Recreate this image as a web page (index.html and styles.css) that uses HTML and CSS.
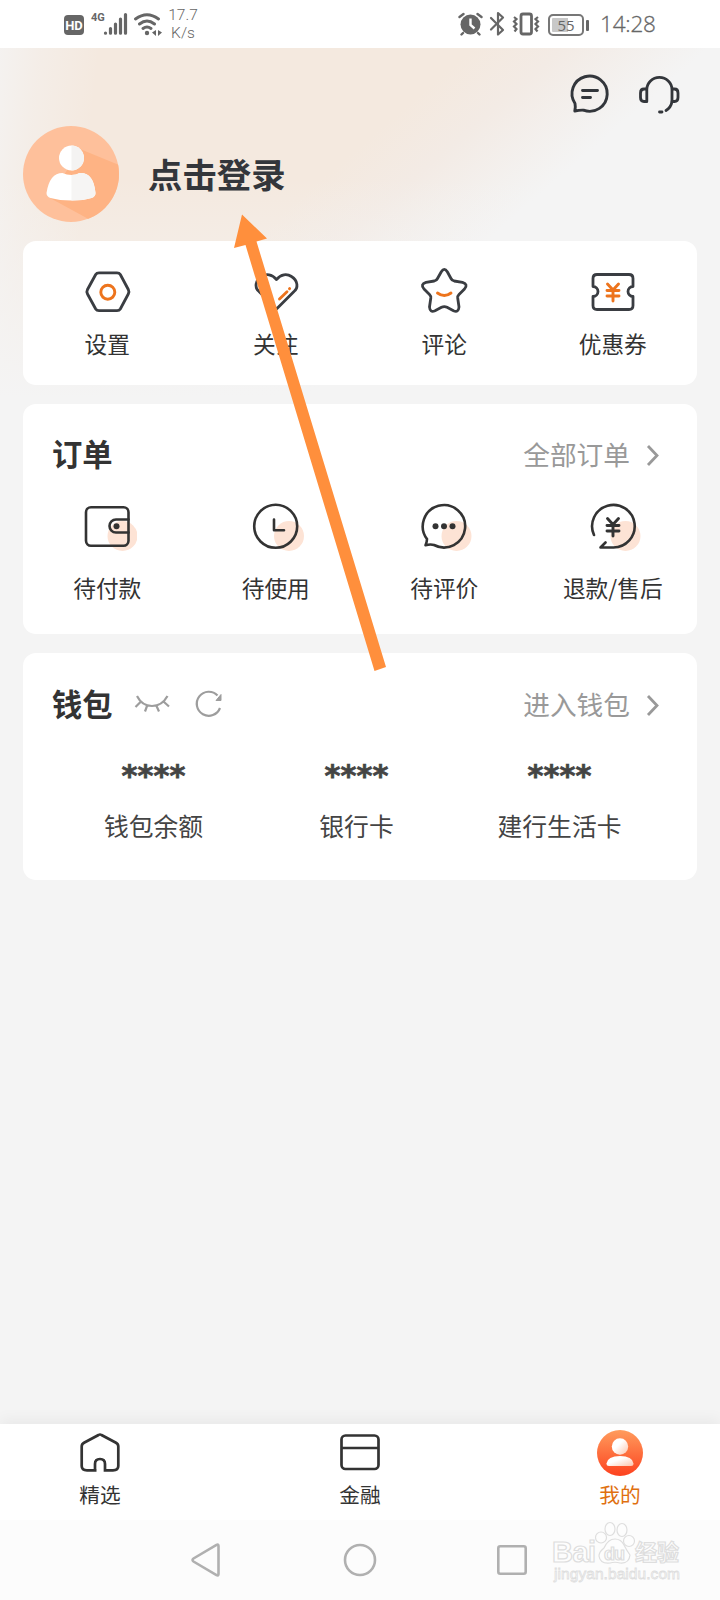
FILE: index.html
```
<!DOCTYPE html>
<html lang="zh-CN">
<head>
<meta charset="utf-8">
<title>我的</title>
<link rel="stylesheet" href="styles.css">
</head>
<body>
<div class="screen">
  <div class="status">
    <div class="status-left">
      <span class="hd">HD</span>
      <span class="net">4G</span>
      <svg class="signal" width="26" height="26" viewBox="102 11 26 26" stroke="#666" stroke-width="3.2" stroke-linecap="round"><path d="M105.500 33v.2M110.500 28.500v4.700M115.500 24v9.200M120.500 19v14.200M125.500 14.500v18.700"/></svg>
      <svg class="wifi" width="30" height="26" viewBox="132 11 30 26" fill="none" stroke="#666" stroke-width="2.900" stroke-linecap="round"><path d="M135.500 19q11.500-8.500 23 0M139.500 24q7.500-6 15 0M143 28.500q4-3 8 0"/><circle cx="147" cy="33" r="2.200" fill="#666" stroke="none"/><path d="M156 30v6l-4-3.500zM158 30v6l4-3.500z" fill="#666" stroke="none"/></svg>
      <span class="speed">17.7<br>K/s</span>
    </div>
    <div class="status-right">
      <svg width="26" height="26" viewBox="458 11 26 26"><circle cx="471.500" cy="24.500" r="10" fill="#666"/><path d="M460.500 17l4-3M482.500 17l-4-3M464 33l-1.500 1.500M479 33l1.500 1.500" stroke="#666" stroke-width="2.400" stroke-linecap="round"/><path d="M471.500 18.500v6.500l4 3.500" fill="none" stroke="#fff" stroke-width="2.400"/></svg>
      <svg width="20" height="26" viewBox="488 11 20 26" fill="none" stroke="#666" stroke-width="2.200" stroke-linejoin="round" stroke-linecap="round"><path d="M492 18l12 12-5 4.500V13l5 4.500-12 12"/></svg>
      <svg width="30" height="26" viewBox="512 11 30 26" fill="none" stroke="#666" stroke-width="2.200"><rect x="522" y="14" width="10.500" height="20" rx="2" stroke-width="2.800"/><path d="M515 17l2.500 2-2.500 2.500 2.500 2.500-2.500 2.500 2.500 2.500-2 2.500M539 17l-2.500 2 2.500 2.500-2.500 2.500 2.500 2.500-2.500 2.500 2 2.500"/></svg>
      <span class="battery">55</span>
      <span class="clock">14:28</span>
    </div>
  </div>

  <main class="page">
    <header class="head">
      <div class="actions">
        <svg width="48" height="44" viewBox="565.500 72 48 44" fill="none" stroke="#33363b" stroke-width="2.900" stroke-linecap="round" stroke-linejoin="round"><path d="M574.500 103.500A17.600 17.600 0 1 1 583 110.200Q579.500 110 574.300 111Q575.300 107.500 574.500 103.500Z"/><path d="M582 90.500h15M582 97.500h8"/></svg>
        <svg width="48" height="44" viewBox="635 72 48 44" fill="none" stroke="#33363b" stroke-width="2.800" stroke-linecap="round" stroke-linejoin="round"><path d="M646.800 101.500V89.500a12.500 12 0 0 1 25.200 0V101.500q-1 6-6 9"/><path d="M646.500 89h-2.500q-3.500 0-3.500 4v4.500q0 4 3.500 4h2.500M672.500 89h2q3.500 0 3.500 4v4.500q0 4-3.500 4h-2.500M659.500 112h2.500"/></svg>
      </div>
      <div class="profile">
        <svg width="96" height="96" viewBox="0 0 96 96">
          <defs><clipPath id="face"><circle cx="48" cy="48" r="48"/></clipPath></defs>
          <g clip-path="url(#face)"><rect width="96" height="96" fill="#fec09b"/><path d="M57 23L96 39v57H71L27 72z" fill="#feb384"/></g>
          <circle cx="48.500" cy="32" r="12.500" fill="#fff"/><path d="M48.500 19.500a12.500 12.500 0 0 1 0 25z" fill="#f4f3f2"/>
          <path d="M48.500 49q5 0 8-2 14-1 16 20 0 3.500-4 5-8 2.500-20 2.500t-21-2.500q-4-1.500-4-5 3-20 16-20 4 2 9 2z" fill="#fff"/><path d="M48.500 49q5 0 8-2 14-1 16 20 0 3.500-4 5-8 2.500-20 2.500z" fill="#f6f5f4"/>
        </svg>
        <h1 class="login">点击登录</h1>
      </div>
    </header>

    <section class="card shortcuts">
      <div class="item">
        <svg class="icon" viewBox="-30 -30 60 60"><path d="M-8-19.200H10Q12.300-19.200 13.300-17.500L21.300-2.500Q22.500-.200 21.300 2L13.300 17Q12.300 18.700 10 18.700H-8Q-10.300 18.700-11.300 17L-19.500 2Q-20.700-.200-19.500-2.500L-11.300-17.500Q-10.300-19.200-8-19.200Z"/><circle class="accent" cx=".8" cy="0.200" r="7"/></svg>
        <span>设置</span>
      </div>
      <div class="item">
        <svg class="icon" viewBox="-30 -30 60 60"><path d="M.500-12.500C5-18 11-18.500 15.500-15.500C22-11.500 22.500-4 18-.500L.500 17L-17-.500C-21.500-4-21-11.500-14.500-15.500C-10-18.500-4-18 .500-12.500Z"/><path class="accent" d="M3.500 7L11-.200M13.500-3.300l.100-.100"/></svg>
        <span>关注</span>
      </div>
      <div class="item">
        <svg class="icon" viewBox="-30 -30 60 60"><path d="M-2.700-20.200Q.300-25 3.300-20.200L7-13.500Q8-11.500 10.200-11L18.500-9.700Q24.500-8 20.500-3L15 2.500Q13.500 4 13.700 6L15 15Q14.500 21 9.500 18.700L3 15.300Q.300 14-2.500 15.300L-9 18.700Q-14 21-14.500 15L-13.200 6Q-13 4-14.500 2.500L-20 -3Q-24-8-18-9.700L-9.700-11Q-7.500-11.500-6.500-13.500Z"/><path class="accent" d="M-6.500 1Q.300 6 7 1"/></svg>
        <span>评论</span>
      </div>
      <div class="item">
        <svg class="icon" viewBox="-30 -30 60 60"><path d="M-16-17.500H16Q20-17.500 20-13.500V-5.500A5 5 0 0 0 20 4.500V13.500Q20 17.500 16 17.500H-16Q-20 17.500-20 13.500V4.500A5 5 0 0 0-20-5.500V-13.500Q-20-17.500-16-17.500Z"/><path class="accent yen" d="M-5.500-8L0-2L5.500-8M0-2V9M-6-1.500H6M-6 4H6"/></svg>
        <span>优惠券</span>
      </div>
    </section>

    <section class="card orders">
      <div class="card-head">
        <h2>订单</h2>
        <a class="more">全部订单<svg width="14" height="24" viewBox="0 0 14 24"><path d="M2 4L11 13.500L2 23"/></svg></a>
      </div>
      <div class="grid4">
        <div class="item">
          <svg class="icon thin" viewBox="-30 -30 60 60"><circle class="blob" cx="15.500" cy="10" r="15"/><rect x="-21" y="-18.700" width="42.500" height="38.500" rx="5"/><path d="M21.500-6.500H9a6.500 6.500 0 0 0 0 13H21.500"/><circle class="dot" cx="9.500" cy="0.300" r="3"/></svg>
          <span>待付款</span>
        </div>
        <div class="item">
          <svg class="icon thin" viewBox="-30 -30 60 60"><circle class="blob" cx="13" cy="10" r="15"/><circle cx="-.300" cy="0.300" r="21.500"/><path d="M-2-6.500V4.300H8"/></svg>
          <span>待使用</span>
        </div>
        <div class="item">
          <svg class="icon thin" viewBox="-30 -30 60 60"><circle class="blob" cx="12.500" cy="10" r="15"/><path d="M-17 13A21.200 21.200 0 1 1-10 19Q-13.500 18-18.500 19.200Q-17 16-17 13Z"/><circle class="dot" cx="-8.500" cy="0.300" r="3"/><circle class="dot" cx="0" cy="0.300" r="3"/><circle class="dot" cx="8.500" cy="0.300" r="3"/></svg>
          <span>待评价</span>
        </div>
        <div class="item">
          <svg class="icon thin" viewBox="-30 -30 60 60"><circle class="blob" cx="12.500" cy="10" r="15"/><path d="M-19 9A21.300 21.300 0 1 1 0 21.500H-12.500L-7.500 16.500"/><path class="yen" d="M-5.500-7.500L0-1.500L5.500-7.500M0-1.500V10M-6-.500H6M-6 5H6"/></svg>
          <span>退款/售后</span>
        </div>
      </div>
    </section>

    <section class="card wallet">
      <div class="card-head">
        <h2>钱包</h2>
        <svg class="eye" width="38" height="24" viewBox="133 691 38 24"><path d="M137 695Q142 705 152 705Q162 705 167.500 695M140.500 701L135.500 706M164 701L169 705.500M147 705L145 710.500M156.500 705L159 710.500"/></svg>
        <svg class="refresh" width="30" height="30" viewBox="194 689 30 30"><path d="M220 708A12 12 0 1 1 217.500 695.500"/><path d="M221 694.500V700.500H216Z" fill="#9d9d9d" stroke-width="1"/></svg>
        <a class="more">进入钱包<svg width="14" height="24" viewBox="0 0 14 24"><path d="M2 4L11 13.500L2 23"/></svg></a>
      </div>
      <div class="grid3">
        <div class="asset"><b>****</b><span>钱包余额</span></div>
        <div class="asset"><b>****</b><span>银行卡</span></div>
        <div class="asset"><b>****</b><span>建行生活卡</span></div>
      </div>
    </section>
  </main>

  <nav class="tabs">
    <div class="tab">
      <svg width="50" height="50" viewBox="-25 -25 50 50"><path d="M-3.500 17.300H-13Q-18.300 17.300-18.300 13V-6.500Q-18.300-9-16-10.300L-1.500-18Q0-19 1.500-18L16-10.300Q18.300-9 18.300-6.500V13Q18.300 17.300 13 17.300H5V11Q5 6 0 6T-5 11V17.300"/></svg>
      <span>精选</span>
    </div>
    <div class="tab">
      <svg width="50" height="50" viewBox="-25 -25 50 50"><rect x="-18.500" y="-17.500" width="37" height="33.500" rx="4"/><path d="M-18.500-5H18.500"/></svg>
      <span>金融</span>
    </div>
    <div class="tab active">
      <svg width="50" height="50" viewBox="-25 -25 50 50">
        <defs><linearGradient id="fire" x1="0" y1="0" x2="0" y2="1"><stop offset="0" stop-color="#ff9c5d"/><stop offset="1" stop-color="#fd421f"/></linearGradient><linearGradient id="pearl" x1="0" y1="0" x2="1" y2="1"><stop offset=".4" stop-color="#fff"/><stop offset="1" stop-color="#fdc3aa"/></linearGradient></defs>
        <circle cx="0" cy="0" r="23" fill="url(#fire)" stroke="none"/><circle cx="0" cy="-6.500" r="8.200" fill="url(#pearl)" stroke="none"/><path d="M-13.500 10.500Q-12.500 3 0 3T13.500 10.500Q13.500 13 11 13H-11Q-13.500 13-13.500 10.500Z" fill="url(#pearl)" stroke="none"/>
      </svg>
      <span>我的</span>
    </div>
  </nav>

  <div class="sysnav">
    <svg width="34" height="40" viewBox="189 1540 34 40"><path d="M217.500 1546V1574Q217.500 1576 215.500 1575L192.500 1561.500Q190.500 1560 192.500 1558.500L215.500 1545Q217.500 1544 217.500 1546Z"/></svg>
    <svg width="34" height="40" viewBox="343 1540 34 40"><circle cx="360" cy="1560" r="15"/></svg>
    <svg width="34" height="40" viewBox="496 1540 34 40"><rect x="498.300" y="1546.300" width="27.400" height="27.400" rx="2"/></svg>
  </div>

  <svg class="watermark" width="136" height="70" viewBox="550 1518 136 70">
    <g class="outline">
      <text class="wm-latin" x="552" y="1562" textLength="44">Bai</text>
      <circle cx="601" cy="1537.500" r="5.500"/><ellipse cx="610" cy="1529" rx="5" ry="6.500"/><ellipse cx="622" cy="1530" rx="5" ry="6.500"/><circle cx="629" cy="1541" r="5.500"/>
      <path d="M615 1539Q621 1539 624 1545T630 1555Q629 1564 620 1563Q615 1561.500 610 1563Q600 1564 599 1556Q599 1552 604 1548Q608 1539 615 1539Z"/>
      <text class="wm-du" x="604" y="1560" textLength="21">du</text>
      <text class="wm-cjk" x="635" y="1560" textLength="44">经验</text>
    </g>
    <text class="wm-url" x="554" y="1579" textLength="126">jingyan.baidu.com</text>
  </svg>

  <svg class="arrow" width="170" height="470" viewBox="225 208 170 470"><path d="M242 214.500L267 238.500L256.500 241.500L386 667L374.500 671L245.500 245L234 248Z" fill="#ff8f3c"/></svg>
</div>
</body>
</html>
```
FILE: styles.css
```
* { box-sizing: border-box; }

body {
  margin: 0;
  font-family: "Noto Sans CJK SC", sans-serif;
  color: #333;
}

h1, h2 { margin: 0; }
svg { display: block; flex: none; }

.screen {
  position: relative;
  display: flex;
  flex-direction: column;
  width: 720px;
  height: 1600px;
  overflow: hidden;
  background: #f4f4f4;
}

/* Status bar */
.status {
  display: flex;
  justify-content: space-between;
  height: 48px;
  padding: 0 65px 0 64px;
  background: #fff;
  color: #666;
}
.status-left, .status-right { display: flex; align-items: center; }
.hd {
  width: 20px;
  height: 20px;
  margin-top: 2px;
  border-radius: 4px;
  background: #666;
  color: #fff;
  font: bold 13px/21px Roboto, sans-serif;
  text-align: center;
}
.net {
  width: 14px;
  margin: -12px 0 0 7px;
  font: bold 11px/12px Roboto, sans-serif;
}
.signal { margin-left: -3px; }
.wifi { margin-left: 4px; }
.speed {
  width: 34px;
  margin-left: 4px;
  font: 300 15.500px/18px Roboto, sans-serif;
  text-align: center;
}
.status-right svg { margin-right: 4px; }
.battery {
  position: relative;
  width: 36px;
  height: 22px;
  margin: 1px 16px 0 3px;
  border: 2px solid #777;
  border-radius: 5px;
  background: linear-gradient(90deg, #c8c8c8 55%, #fff 55%);
  box-shadow: inset 0 0 0 2px #fff;
  font: 15px/18px "Open Sans", sans-serif;
  text-align: center;
}
.battery::after {
  content: "";
  position: absolute;
  top: 4px;
  right: -7px;
  width: 3px;
  height: 11px;
  border-radius: 1px;
  background: #666;
}
.clock {
  width: 55px;
  font: 300 22.500px/30px "Open Sans", sans-serif;
  letter-spacing: -.2px;
  -webkit-text-stroke: .3px #666;
}

/* Page */
.page {
  flex: 1;
  padding: 0 23px;
  background:
    linear-gradient(180deg, rgba(244, 244, 244, 0) 130px, #f4f4f4 350px) 0 0 / 100% 400px no-repeat,
    linear-gradient(96deg, rgba(244, 244, 244, .8), rgba(244, 244, 244, .4) 40px, rgba(244, 244, 244, 0) 100px) 0 0 / 100% 400px no-repeat,
    linear-gradient(139deg, #f4e9df 310px, #f3ebe5 370px, #f4f4f4 465px) 0 0 / 100% 400px no-repeat;
}
.actions {
  display: flex;
  justify-content: flex-end;
  gap: 21px;
  height: 78px;
  padding: 24px 14px 0 0;
}
.profile {
  display: flex;
  align-items: center;
  gap: 29px;
  height: 96px;
  margin-bottom: 19px;
}
.login { margin-top: -3px; font-size: 34.400px; line-height: 44px; color: #33363b; }

.card {
  margin-bottom: 19px;
  border-radius: 13px;
  background: #fff;
}
.shortcuts, .grid4 { display: grid; grid-template-columns: repeat(4, 1fr); }
.shortcuts { height: 144px; padding-top: 21px; }
.orders { height: 230px; padding-top: 30px; }
.wallet { height: 227px; padding-top: 31px; }

.item {
  display: flex;
  flex-direction: column;
  align-items: center;
  font-size: 22.700px;
  line-height: 30px;
}
.shortcuts .item { gap: 7px; }
.grid4 .item { gap: 17px; }

.icon {
  width: 60px;
  height: 60px;
  fill: none;
  stroke: #3a3d42;
  stroke-width: 2.800;
  stroke-linecap: round;
  stroke-linejoin: round;
}
.icon.thin { stroke: #333; stroke-width: 2.600; }
.icon .accent { stroke: #ed741d; stroke-width: 2.900; }
.icon .yen { stroke-width: 2.900; }
.icon .blob { fill: #fde3d5; stroke: none; }
.icon .dot { fill: #333; stroke: none; }

.card-head {
  display: flex;
  align-items: center;
  height: 40px;
  padding: 0 37px 0 29px;
}
.card-head h2 { margin-top: -2px; font-size: 30.300px; line-height: 40px; }
.more {
  display: flex;
  align-items: center;
  gap: 16px;
  margin-left: auto;
  color: #999;
  font-size: 26.700px;
  line-height: 40px;
}
.more svg { fill: none; stroke: #999; stroke-width: 2.800; }
.grid4 { margin-top: 22px; }
.eye, .refresh { fill: none; stroke: #9d9d9d; stroke-width: 2.200; }
.eye { margin-left: 20px; }
.refresh { margin-left: 23px; }

.grid3 {
  display: grid;
  grid-template-columns: repeat(3, 203px);
  padding: 22px 0 0 29px;
}
.asset {
  display: flex;
  flex-direction: column;
  align-items: center;
  color: #444;
}
.asset b {
  height: 62px;
  font: bold 30.500px/60px "DejaVu Sans", sans-serif;
  -webkit-text-stroke: .7px #444;
}
.asset span { font-size: 24.800px; line-height: 34px; }

/* Tab bar */
.tabs {
  position: relative;
  display: flex;
  justify-content: space-between;
  height: 96px;
  padding: 4px 60px 0;
  background: #fff;
  box-shadow: 0 -4px 14px rgba(0, 0, 0, .05);
}
.tab {
  display: flex;
  flex-direction: column;
  align-items: center;
  width: 80px;
  font-size: 20.700px;
  line-height: 32px;
}
.tab svg { fill: none; stroke: #333; stroke-width: 2.700; }
.tab.active { color: #e0700f; }

/* System navigation */
.sysnav {
  position: relative;
  display: flex;
  align-items: center;
  gap: 119px;
  height: 80px;
  padding-left: 190px;
  background: #fcfcfc;
}
.sysnav svg { fill: none; stroke: #b0b0b0; stroke-width: 2.600; }

.watermark { position: absolute; left: 550px; top: 1518px; }
.outline { fill: #fdfdfd; stroke: #dedede; stroke-width: 1.200; }
.wm-latin { font: bold 29px "Liberation Sans", sans-serif; }
.wm-du { font: bold 18px "Liberation Sans", sans-serif; }
.wm-cjk { font: bold 22px "Noto Sans CJK SC", sans-serif; }
.wm-url { font: 15.500px "Liberation Sans", sans-serif; fill: #fcfcfc; stroke: #dedede; stroke-width: .8; }

.arrow { position: absolute; left: 225px; top: 208px; }
```
